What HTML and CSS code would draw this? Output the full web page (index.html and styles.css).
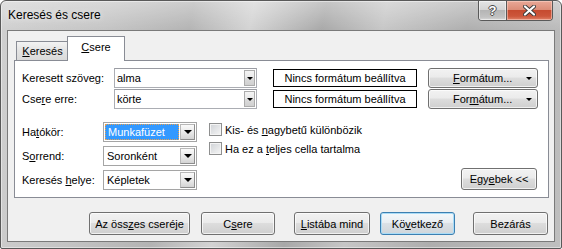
FILE: index.html
```html
<!DOCTYPE html>
<html lang="hu">

<head>
    <meta charset="UTF-8">
    <meta name="viewport" content="width=device-width, initial-scale=1.0">
    <title>Keresés és csere</title>
    <link rel="stylesheet" href="styles.css">
</head>

<body>
    <div class="window">
        <div class="titlebar">
            <span class="title">Keresés és csere</span>
            <div class="caption-buttons">
                <div class="caption help">?</div>
                <div class="caption close">
                    <svg width="13" height="11" viewBox="0 0 13 11">
                        <path d="M2 1.5 L11 9.5 M11 1.5 L2 9.5" stroke="#3b3b3b" stroke-width="4" stroke-linecap="round" />
                        <path d="M2 1.5 L11 9.5 M11 1.5 L2 9.5" stroke="#ffffff" stroke-width="2.2" stroke-linecap="round" />
                    </svg>
                </div>
            </div>
        </div>

        <div class="client">
            <div class="tabs">
                <div class="tab"><u>K</u>eresés</div>
                <div class="tab active"><u>C</u>sere</div>
            </div>

            <div class="panel">
                <div class="find-grid">
                    <label>Keresett szöve<u>g</u>:</label>
                    <div class="combo">
                        <span class="value">alma</span>
                        <span class="arrow"><i></i></span>
                    </div>
                    <div class="format-box">Nincs formátum beállítva</div>
                    <div class="btn menu-btn"><span><u>F</u>ormátum...</span><i class="tri"></i></div>

                    <label>Cse<u>r</u>e erre:</label>
                    <div class="combo">
                        <span class="value">körte</span>
                        <span class="arrow"><i></i></span>
                    </div>
                    <div class="format-box">Nincs formátum beállítva</div>
                    <div class="btn menu-btn"><span>For<u>m</u>átum...</span><i class="tri"></i></div>
                </div>

                <div class="options">
                    <div class="option-grid">
                        <label>Ha<u>t</u>ókör:</label>
                        <div class="combo list">
                            <span class="value selected">Munkafüzet</span>
                            <span class="arrow"><i></i></span>
                        </div>

                        <label>S<u>o</u>rrend:</label>
                        <div class="combo list">
                            <span class="value">Soronként</span>
                            <span class="arrow"><i></i></span>
                        </div>

                        <label>Keresés <u>h</u>elye:</label>
                        <div class="combo list">
                            <span class="value">Képletek</span>
                            <span class="arrow"><i></i></span>
                        </div>
                    </div>

                    <div class="checks">
                        <div class="check"><span class="box"></span><span>Kis- és <u>n</u>agybetű különbözik</span></div>
                        <div class="check"><span class="box"></span><span>Ha ez a <u>t</u>eljes cella tartalma</span></div>
                    </div>

                    <div class="btn more-btn"><span>Egy<u>e</u>bek &lt;&lt;</span></div>
                </div>
            </div>

            <div class="actions">
                <div class="btn w-all"><span>Az öss<u>z</u>es cseréje</span></div>
                <div class="btn w-74 gap-11"><span>C<u>s</u>ere</span></div>
                <div class="btn gap-19 w-list"><span><u>L</u>istába mind</span></div>
                <div class="btn default gap-10"><span>Kö<u>v</u>etkező</span></div>
                <div class="btn gap-18"><span>Bezárás</span></div>
            </div>
        </div>
    </div>
</body>

</html>
```

FILE: styles.css
```css
body {
    margin: 0;
    font-family: "Liberation Sans", Arial, sans-serif;
    font-size: 11px;
    color: #000;
}

u {
    text-decoration: underline;
    text-underline-offset: 1px;
}

.window {
    width: 562px;
    height: 249px;
    box-sizing: border-box;
    border: 1px solid #595959;
    border-radius: 6px 6px 2px 2px;
    background:
        linear-gradient(rgba(255, 255, 255, 0.35), rgba(255, 255, 255, 0) 30px),
        linear-gradient(100deg, #d0d0d0 0%, #c4c4c4 18%, #b3b3b3 32%, #d3d3d3 42%, #a8a8a8 54%, #c6c6c6 64%, #aeaeae 78%, #bfbfbf 100%);
    box-shadow: inset 0 0 0 1px rgba(255, 255, 255, 0.45);
}

.titlebar {
    height: 29px;
    display: flex;
    align-items: flex-start;
    padding: 0 8px 0 7px;
}

.title {
    font-size: 12px;
    line-height: 29px;
    text-shadow: 0 0 6px rgba(255, 255, 255, 0.8);
}

.caption-buttons {
    margin-left: auto;
    display: flex;
    height: 19px;
    border: 1px solid #595959;
    border-top: none;
    border-radius: 0 0 4px 4px;
    overflow: hidden;
}

.caption {
    display: flex;
    align-items: center;
    justify-content: center;
    height: 19px;
}

.help {
    width: 27px;
    border-right: 1px solid #595959;
    background: linear-gradient(#e4e4e4 0%, #d4d4d4 45%, #b5b5b5 50%, #c2c2c2 85%, #d8d8d8 100%);
    box-shadow: inset 0 0 0 1px rgba(255, 255, 255, 0.5);
    color: #fff;
    font-weight: bold;
    font-size: 13px;
    text-shadow: 1px 0 0 #4a4a4a, -1px 0 0 #4a4a4a, 0 1px 0 #4a4a4a, 0 -1px 0 #4a4a4a;
}

.close {
    width: 45px;
    background: linear-gradient(#e9a897 0%, #dc8d78 45%, #c64b30 50%, #cc563b 80%, #e08268 100%);
    box-shadow: inset 0 0 0 1px rgba(255, 220, 210, 0.5);
}

.client {
    margin: 0 6px;
    height: 212px;
    box-sizing: border-box;
    border: 1px solid #7a7a7a;
    background: #f0f0f0;
    padding: 6px 6px 0 6px;
    display: flex;
    flex-direction: column;
}

.tabs {
    display: flex;
    align-items: flex-end;
    height: 23px;
    padding-left: 2px;
}

.tab {
    width: 53px;
    height: 19px;
    box-sizing: border-box;
    border: 1px solid #898c95;
    border-bottom: none;
    background: linear-gradient(#f3f3f3, #e3e3e3 50%, #dadada);
    text-align: center;
    line-height: 19px;
}

.tab.active {
    width: 58px;
    height: 25px;
    margin: 0 0 -1px -2px;
    background: #fff;
    line-height: 21px;
    position: relative;
    z-index: 1;
}

.panel {
    height: 138px;
    margin-right: -1px;
    box-sizing: border-box;
    border: 1px solid #898c95;
    background: #fff;
    padding: 7px 10px 0 7px;
}

.find-grid {
    display: grid;
    grid-template-columns: 92px 159px 155px 110px;
    grid-template-rows: 20px 20px;
    row-gap: 1px;
    align-items: center;
}

.option-grid {
    display: grid;
    grid-template-columns: 81px 94px;
    grid-template-rows: 20px 20px 20px;
    row-gap: 4px;
    align-items: center;
}

.combo {
    display: flex;
    width: 143px;
    height: 20px;
    box-sizing: border-box;
    border: 1px solid #abadb3;
    border-top-color: #9a9ca3;
    background: #fff;
}

.combo .value {
    flex: 1;
    padding-left: 2px;
    line-height: 18px;
}

.combo .arrow {
    width: 11px;
    margin: 1px;
    box-sizing: border-box;
    border: 1px solid #acacac;
    background: linear-gradient(#f4f4f4, #e9e9e9 50%, #dcdcdc 50%, #d0d0d0);
    display: flex;
    align-items: center;
    justify-content: center;
}

.combo .arrow i,
.tri {
    display: block;
    width: 0;
    height: 0;
    border-left: 3px solid transparent;
    border-right: 3px solid transparent;
    border-top: 3px solid #000;
}

.combo.list {
    width: 94px;
    height: 20px;
    border-color: #a5a5a5;
}

.combo.list .value {
    padding-left: 3px;
}

.combo.list .arrow {
    width: 15px;
    margin: 1px 1px 1px 0;
    border-color: #b8b8b8 #8d8d8d #8d8d8d #b8b8b8;
    background: linear-gradient(#fafafa, #e6e6e6 60%, #d4d4d4);
}

.combo.list .arrow i {
    border-left-width: 4px;
    border-right-width: 4px;
    border-top-width: 4px;
}

.combo .selected {
    margin: 1px;
    padding-left: 2px;
    line-height: 16px;
    background: #3399ff;
    color: #fff;
    outline: 1px dotted #e8a050;
    outline-offset: -1px;
}

.format-box {
    width: 144px;
    height: 18px;
    box-sizing: border-box;
    border: 1px solid #000;
    background: #fff;
    text-align: center;
    line-height: 16px;
}

.btn {
    height: 23px;
    box-sizing: border-box;
    border: 1px solid #707070;
    border-radius: 3px;
    background: linear-gradient(#f2f2f2 0%, #ebebeb 45%, #dddddd 50%, #cfcfcf 100%);
    box-shadow: inset 0 0 0 1px rgba(255, 255, 255, 0.7);
    display: flex;
    align-items: center;
    justify-content: center;
    width: 75px;
}

.menu-btn {
    width: 110px;
    height: 20px;
    position: relative;
    justify-content: flex-start;
    padding-left: 24px;
}

.menu-btn .tri {
    position: absolute;
    right: 5px;
    top: 8px;
}

.options {
    display: flex;
    margin-top: 13px;
}

.checks {
    margin-left: 12px;
    display: flex;
    flex-direction: column;
    gap: 6px;
    padding-top: 1px;
}

.check {
    display: flex;
    align-items: center;
    height: 13px;
}

.check .box {
    width: 13px;
    height: 13px;
    box-sizing: border-box;
    margin-right: 3px;
    border: 1px solid #8e8f8f;
    background: linear-gradient(135deg, #cfd2d6, #f6f6f6);
    box-shadow: inset 0 0 0 1px #f4f4f4;
}

.more-btn {
    margin: 0 1px 0 auto;
    align-self: flex-end;
    width: 76px;
    height: 22px;
}

.actions {
    display: flex;
    justify-content: flex-end;
    margin-top: 14px;
}

.actions .gap-10 {
    margin-left: 10px;
}

.actions .gap-11 {
    margin-left: 11px;
}

.actions .gap-18 {
    margin-left: 18px;
}

.actions .gap-19 {
    margin-left: 19px;
}

.w-all {
    width: 101px;
}

.w-74 {
    width: 74px;
}

.w-list {
    width: 76px;
}

.btn.default {
    border-color: #3c7fb1;
    box-shadow: inset 0 0 0 1px #a9dcf7;
    background: linear-gradient(#f4f8fb 0%, #e9eef2 45%, #dbe1e6 50%, #cfd5da 100%);
}
```
